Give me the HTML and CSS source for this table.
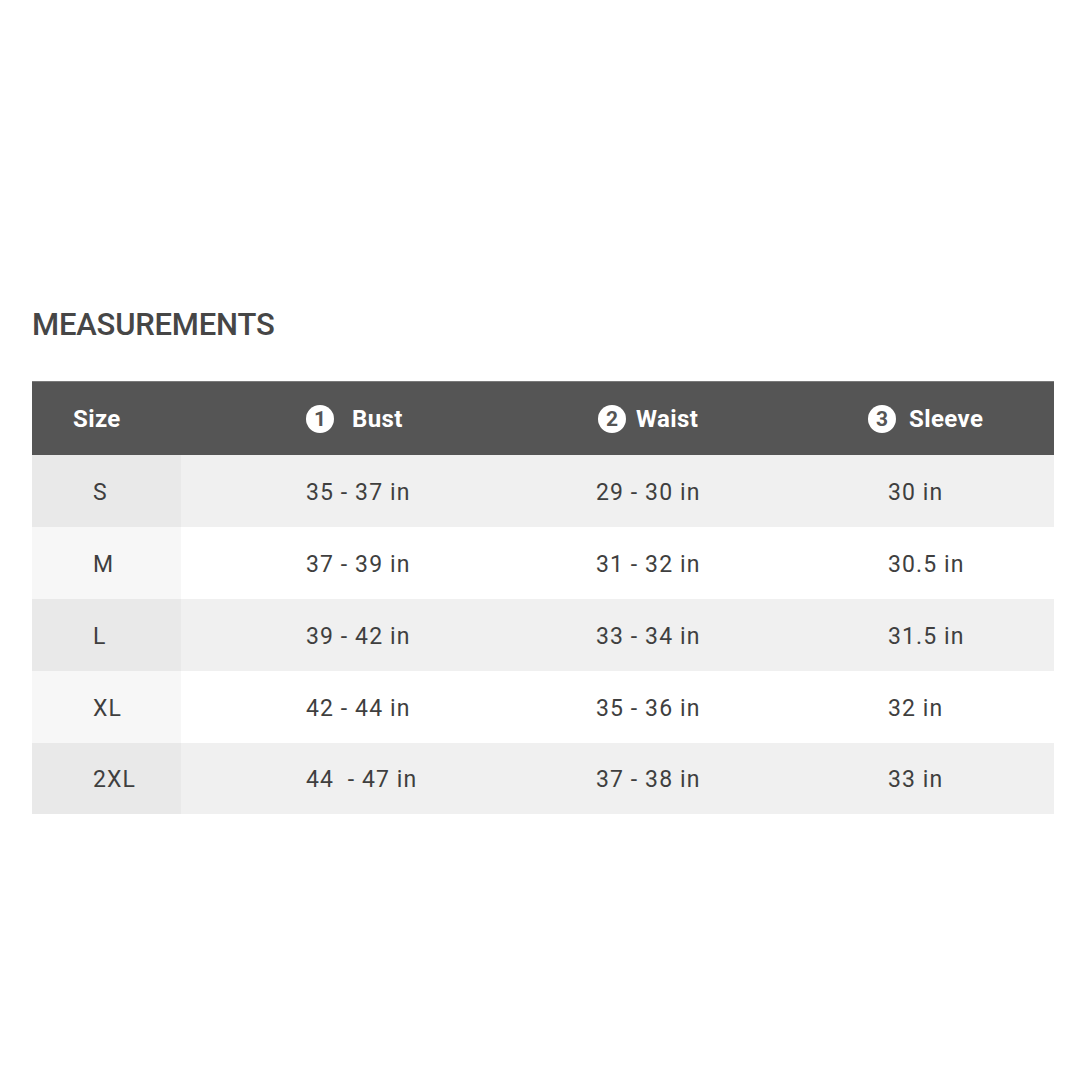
FILE: index.html
```html
<!DOCTYPE html>
<html lang="en">
<head>
<meta charset="utf-8">
<title>Measurements</title>
<link rel="stylesheet" href="styles.css">
</head>
<body>
<main class="page">
  <h1 class="title">MEASUREMENTS</h1>
  <div class="table">
    <div class="row head">
      <div class="cell c1"><span class="hsize">Size</span></div>
      <div class="cell c2"><span class="num">1</span><span class="hlabel gap-bust">Bust</span></div>
      <div class="cell c3"><span class="num">2</span><span class="hlabel gap-waist">Waist</span></div>
      <div class="cell c4"><span class="num">3</span><span class="hlabel gap-sleeve">Sleeve</span></div>
    </div>
    <div class="row shade">
      <div class="cell c1">S</div><div class="cell c2">35 - 37 in</div><div class="cell c3">29 - 30 in</div><div class="cell c4">30 in</div>
    </div>
    <div class="row plain">
      <div class="cell c1">M</div><div class="cell c2">37 - 39 in</div><div class="cell c3">31 - 32 in</div><div class="cell c4">30.5 in</div>
    </div>
    <div class="row shade">
      <div class="cell c1">L</div><div class="cell c2">39 - 42 in</div><div class="cell c3">33 - 34 in</div><div class="cell c4">31.5 in</div>
    </div>
    <div class="row plain">
      <div class="cell c1">XL</div><div class="cell c2">42 - 44 in</div><div class="cell c3">35 - 36 in</div><div class="cell c4">32 in</div>
    </div>
    <div class="row shade last">
      <div class="cell c1">2XL</div><div class="cell c2">44&nbsp; - 47 in</div><div class="cell c3">37 - 38 in</div><div class="cell c4">33 in</div>
    </div>
  </div>
</main>
</body>
</html>
```
FILE: styles.css
```css
* { box-sizing: border-box; }
html, body { margin: 0; padding: 0; background: #ffffff; }
body {
  font-family: Roboto, "Liberation Sans", sans-serif;
  color: #3f3f3f;
}
.page {
  padding: 307px 26px 0 32px;
}
.title {
  margin: 0 0 38px 0;
  font-size: 31px;
  line-height: 36px;
  font-weight: 500;
  color: #464646;
  letter-spacing: -0.2px;
}
.table {
  width: 1022px;
}
.row {
  display: grid;
  grid-template-columns: 149px 415px 292px 166px;
  height: 72px;
  align-items: stretch;
}
.row.head {
  height: 74px;
  background: #555555;
  border-top: 1px solid #7a7a7a;
  color: #ffffff;
}
.row.last { height: 71px; }
.cell {
  display: flex;
  align-items: center;
  padding-top: 2px;
  font-size: 23px;
  font-weight: 400;
  letter-spacing: 1.1px;
}
.c1 { padding-left: 61px; }
.c2 { padding-left: 125px; }
.c3 { padding-left: 0; }
.c4 { padding-left: 0; }
.shade { background: #f0f0f0; }
.shade .c1 { background: #e9e9e9; }
.plain { background: #ffffff; }
.plain .c1 { background: #f7f7f7; }
.head .cell { padding-top: 0; }
.head .c1 { padding-left: 41px; background: transparent; }
.head .c2 { padding-left: 125px; }
.head .c3 { padding-left: 2px; }
.head .c4 { margin-left: -20px; }
.hsize, .hlabel {
  font-weight: 700;
  font-size: 24px;
  letter-spacing: 0.4px;
}
.num {
  width: 28px;
  height: 28px;
  border-radius: 50%;
  background: #ffffff;
  color: #555555;
  font-size: 21px;
  font-weight: 700;
  letter-spacing: 0;
  display: flex;
  align-items: center;
  justify-content: center;
}
.gap-bust { margin-left: 18px; }
.gap-waist { margin-left: 10px; }
.gap-sleeve { margin-left: 13px; }
```
